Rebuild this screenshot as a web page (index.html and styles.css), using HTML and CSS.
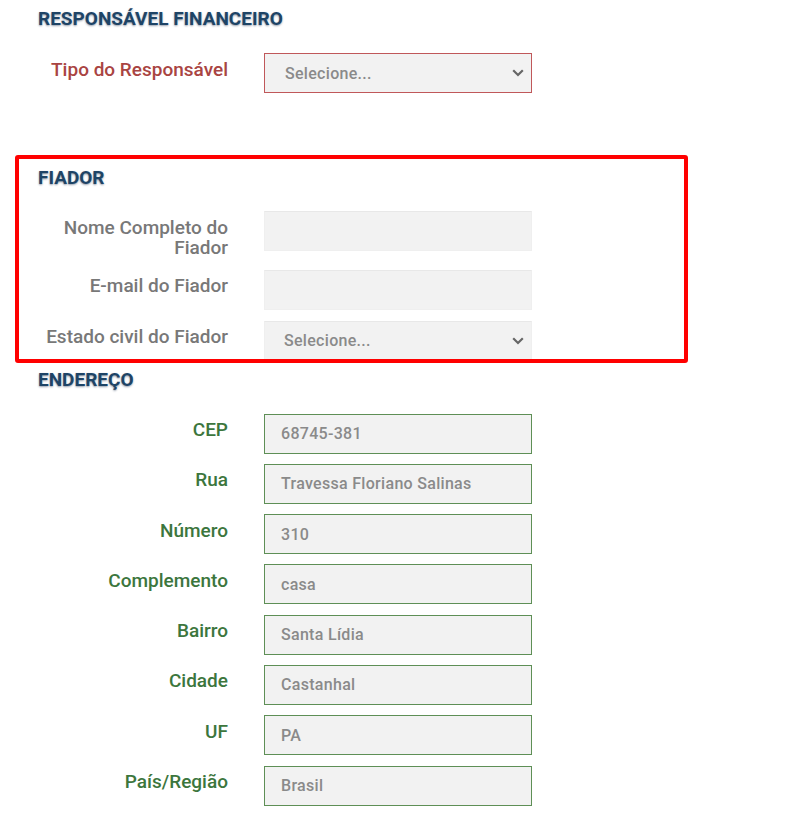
FILE: index.html
```html
<!DOCTYPE html>
<html lang="pt-BR">
<head>
<meta charset="utf-8">
<title>Cadastro</title>
<link rel="stylesheet" href="styles.css">
</head>
<body>
<div class="page">
  <section class="group group-first">
    <h3 class="group-title">RESPONSÁVEL FINANCEIRO</h3>
    <div class="row">
      <label class="lbl lbl-error">Tipo do Responsável</label>
      <div class="control select error">
        <span class="value">Selecione...</span>
        <svg class="chev" viewBox="0 0 12 8" width="12" height="8"><path d="M1.2 1.3 L6 6 L10.8 1.3" fill="none" stroke="#666" stroke-width="2.2"/></svg>
      </div>
    </div>
  </section>

  <section class="group group-mid">
    <h3 class="group-title">FIADOR</h3>
    <div class="row row-tall">
      <label class="lbl lbl-muted">Nome Completo do Fiador</label>
      <div class="control plain"></div>
    </div>
    <div class="row row-mail">
      <label class="lbl lbl-muted">E-mail do Fiador</label>
      <div class="control plain"></div>
    </div>
    <div class="row row-last">
      <label class="lbl lbl-muted">Estado civil do Fiador</label>
      <div class="control select plain">
        <span class="value">Selecione...</span>
        <svg class="chev" viewBox="0 0 12 8" width="12" height="8"><path d="M1.2 1.3 L6 6 L10.8 1.3" fill="none" stroke="#666" stroke-width="2.2"/></svg>
      </div>
    </div>
    <div class="highlight"></div>
  </section>

  <section class="group">
    <h3 class="group-title">ENDEREÇO</h3>
    <div class="row addr"><label class="lbl lbl-ok">CEP</label><div class="control ok"><span class="value">68745-381</span></div></div>
    <div class="row addr"><label class="lbl lbl-ok">Rua</label><div class="control ok"><span class="value">Travessa Floriano Salinas</span></div></div>
    <div class="row addr"><label class="lbl lbl-ok">Número</label><div class="control ok"><span class="value">310</span></div></div>
    <div class="row addr"><label class="lbl lbl-ok">Complemento</label><div class="control ok"><span class="value">casa</span></div></div>
    <div class="row addr"><label class="lbl lbl-ok">Bairro</label><div class="control ok"><span class="value">Santa Lídia</span></div></div>
    <div class="row addr"><label class="lbl lbl-ok">Cidade</label><div class="control ok"><span class="value">Castanhal</span></div></div>
    <div class="row addr"><label class="lbl lbl-ok">UF</label><div class="control ok"><span class="value">PA</span></div></div>
    <div class="row addr"><label class="lbl lbl-ok">País/Região</label><div class="control ok"><span class="value">Brasil</span></div></div>
  </section>
</div>
</body>
</html>
```

FILE: styles.css
```css
html, body {
  margin: 0;
  padding: 0;
  background: #fff;
}

body {
  font-family: Roboto, "Liberation Sans", sans-serif;
}

.page {
  padding: 8px 0 0 38px;
}

.group {
  position: relative;
}

.group-first {
  margin-bottom: 74px;
}

.group-title {
  margin: 0 0 23px 0;
  font-size: 19px;
  line-height: 22px;
  font-weight: 700;
  letter-spacing: 0;
  color: #1e4466;
  text-shadow: 0 1px 2px rgba(20, 40, 70, 0.45);
}

.group-mid .group-title {
  margin-bottom: 22px;
}

.row {
  display: flex;
  align-items: flex-start;
  gap: 36px;
  margin-bottom: 10px;
}

.row-tall {
  margin-bottom: 12px;
}

.row-mail {
  margin-bottom: 11px;
}

.row-last {
  margin-bottom: 8px;
}

.row.addr {
  margin-bottom: 10.3px;
}

.lbl {
  width: 190px;
  flex: none;
  text-align: right;
  font-size: 19px;
  line-height: 20px;
  padding-top: 6.5px;
  font-weight: 500;
}

.lbl-error { color: #a94442; }
.lbl-muted { color: #787878; }
.lbl-ok { color: #3c763d; }

.control {
  width: 268px;
  height: 40px;
  box-sizing: border-box;
  background: #f2f2f2;
  display: flex;
  align-items: center;
  padding: 0 7px 0 16px;
  font-size: 16px;
  letter-spacing: 0.3px;
  color: #888;
}

.control.error {
  border: 1px solid #c0585a;
  padding-left: 20px;
}

.control.plain {
  border: 1px solid #efefef;
  border-top-color: #e8e8e8;
  padding-left: 19px;
}

.control.ok {
  border: 1.5px solid #5e8f56;
  padding-left: 16px;
}

.select {
  justify-content: space-between;
}

.value {
  font-weight: 500;
  color: #8a8a8a;
}

.chev {
  display: block;
}

.highlight {
  position: absolute;
  left: -23px;
  top: -12px;
  width: 673px;
  height: 208px;
  box-sizing: border-box;
  border: 4.5px solid #ff0000;
  border-radius: 3px;
  pointer-events: none;
}
```
